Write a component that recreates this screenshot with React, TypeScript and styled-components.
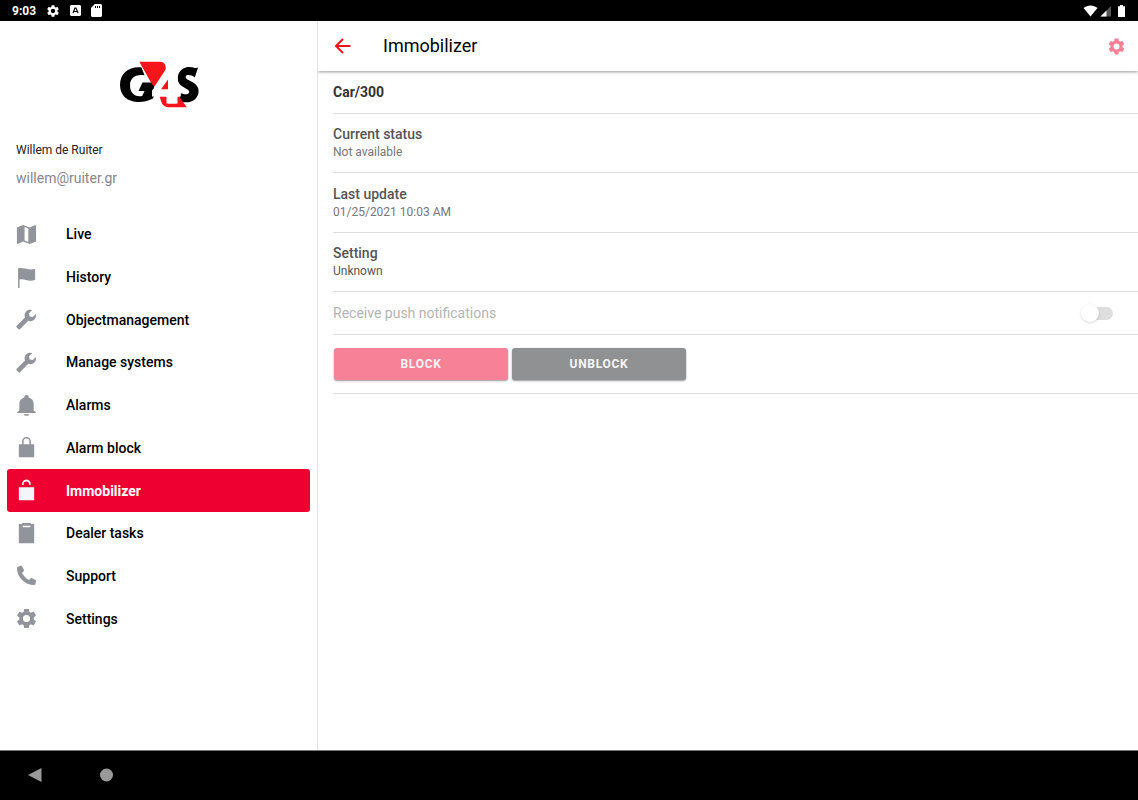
import React from "react";
import styled, { createGlobalStyle } from "styled-components";

const GlobalStyle = createGlobalStyle`
  *, *::before, *::after { box-sizing: border-box; }
  html, body { margin: 0; background: #fff; }
  body { font-family: Roboto, sans-serif; color: #000; }
`;

const Screen = styled.div`
  display: flex;
  flex-direction: column;
  min-height: 100vh;
`;

const StatusBar = styled.div`
  display: flex;
  align-items: center;
  justify-content: space-between;
  height: 21px;
  padding: 0 12px;
  background: #000;
  color: #fff;
`;

const StatusGroup = styled.div<{ $gap: number }>`
  display: flex;
  align-items: center;
  gap: ${(p) => p.$gap}px;
`;

const Clock = styled.span`
  font-size: 12px;
  line-height: 20px;
  font-weight: 700;
`;

const Body = styled.div`
  display: flex;
  flex: 1;
`;

const Sidebar = styled.aside`
  flex: 0 0 318px;
  border-right: 1px solid #e4e4e4;
`;

const LogoWrap = styled.div`
  display: flex;
  justify-content: center;
  padding: 39px 0 28px;

  svg { display: block; }
`;

const Profile = styled.div`
  padding: 0 16px;
`;

const UserName = styled.div`
  font-size: 12px;
  line-height: 24px;
  padding-top: 1px;
  color: #222;
`;

const UserMail = styled.div`
  padding-top: 4px;
  font-size: 14px;
  line-height: 24px;
  color: #85868f;
`;

const Menu = styled.nav`
  display: grid;
  grid-auto-rows: 1fr;
  height: 427px;
  margin-top: 23px;
  padding: 0 7px;
`;

const MenuItem = styled.a<{ $active?: boolean }>`
  display: flex;
  align-items: center;
  gap: 28px;
  padding: 0 8px;
  border-radius: 3px;
  font-size: 14px;
  line-height: 20px;
  font-weight: ${(p) => (p.$active ? 700 : 500)};
  text-decoration: none;
  color: ${(p) => (p.$active ? "#fff" : "#000")};
  background: ${(p) => (p.$active ? "#ee0030" : "transparent")};

  svg {
    width: 23px;
    height: 23px;
    color: ${(p) => (p.$active ? "#f4f5f8" : "#92949c")};
  }
`;

const Main = styled.main`
  flex: 1;
  min-width: 0;
`;

const Header = styled.header`
  display: flex;
  align-items: center;
  height: 50px;
  padding: 0 12px 0 15px;
  box-shadow: 0 1px 3px rgba(0, 0, 0, 0.4);
  clip-path: inset(0 0 -6px 0);
`;

const IconButton = styled.button<{ $color?: string }>`
  display: flex;
  padding: 0;
  border: 0;
  background: none;
  color: ${(p) => p.$color ?? "inherit"};
`;

const Title = styled.h1`
  flex: 1;
  margin: 0 0 0 30px;
  font-size: 18px;
  line-height: 24px;
  font-weight: 400;
  color: #000;
`;

const Rows = styled.div`
  padding-left: 15px;
`;

const Row = styled.section<{ $height: number }>`
  display: flex;
  flex-direction: column;
  justify-content: center;
  min-height: ${(p) => p.$height}px;
  border-bottom: 1px solid #dedede;
`;

const ObjectName = styled.h2`
  margin: 0;
  font-size: 14px;
  line-height: 18px;
  font-weight: 700;
  color: #333;
`;

const RowLabel = styled.div`
  font-size: 14px;
  line-height: 18px;
  font-weight: 500;
  color: #555;
`;

const RowValue = styled.div<{ $dark?: boolean }>`
  font-size: 12px;
  line-height: 18px;
  color: ${(p) => (p.$dark ? "#555" : "#777")};
`;

const ToggleLabel = styled.label`
  display: flex;
  align-items: center;
  justify-content: space-between;
  padding-right: 25px;
  font-size: 14px;
  line-height: 20px;
  color: #b4b4b4;
`;

const Toggle = styled.input`
  appearance: none;
  display: flex;
  align-items: center;
  width: 28px;
  height: 13px;
  margin: 0;
  border-radius: 7px;
  background: #dedede;

  &::before {
    content: "";
    flex: none;
    width: 18px;
    height: 18px;
    margin-left: -4px;
    border-radius: 50%;
    background: #fff;
    box-shadow: 0 1px 3px rgba(0, 0, 0, 0.16);
  }
`;

const Actions = styled.div`
  display: flex;
  gap: 4px;
  padding-left: 1px;
`;

const ActionButton = styled.button<{ $color: string }>`
  width: 174px;
  height: 32px;
  padding: 0;
  border: 0;
  border-radius: 3px;
  background: ${(p) => p.$color};
  color: #f6f6f6;
  font-family: inherit;
  font-size: 12px;
  line-height: 16px;
  font-weight: 700;
  letter-spacing: 0.06em;
  text-transform: uppercase;
  box-shadow: 0 1px 2px rgba(0, 0, 0, 0.4);
`;

const NavBar = styled.footer`
  display: flex;
  align-items: center;
  gap: 58px;
  height: 50px;
  padding: 0 28px 2px;
  border-top: 1px solid #777;
  background: #000;
`;

const icons = {
  map: "M2 4.700 8.400 2v17.200L2.500 22 2 21.500zM8.400 2l6.900 2.700V22L8.400 19.200zM10 4.200v14l3.900 1.600V5.700zM15.300 4.700 21.500 2l.5.500v16.800L15.300 22z",
  flag: "M3.200 2.500C5 1.700 7.500 1.900 10.200 2.700c2.900.8 5.800 1.300 10.800.4v11.600c-3.500.9-6.400.8-9.600-.1-2.400-.7-4.700-1-6.600-.6V23H3.200z",
  wrench:
    "M21.6 6.3l-3.1 3.1-3.200-.6-.7-3.300 3.200-3.100c-2.200-.9-4.600-.4-6.200 1.200-1.700 1.700-2 4-1.200 6.300L1.600 18.700c-.4.400-.4.900 0 1.300l2.200 2.200c.4.400.9.400 1.300 0l8.800-8.900c2.100.9 4.500.4 6.300-1.300 1.600-1.600 2.100-3.600 1.400-5.700z",
  bell: "M12 22.800c1.700 0 2.900-.8 3-1.700H9c.1.900 1.300 1.700 3 1.700zm7.500-5.500V10.500c0-3.500-2-6-5.100-6.900v-.5A2.300 2.300 0 0 0 12 1a2.300 2.300 0 0 0-2.400 2.100v.5c-3.100.9-5.100 3.400-5.100 6.900v6.800l-2.300 1.800v.7h19.600v-.7l-2.300-1.800z",
  lock: "M4 8.500h3.400V5.600a4.600 4.600 0 0 1 9.200 0v2.900H20v13.700H4zM9 8.500h6V5.600a3 3 0 0 0-6 0z",
  unlock:
    "M4 8.500h5V6.300H7.300V5.500a4.600 4.600 0 0 1 9.200-.5v1h-1.900v-.6a2.800 2.800 0 0 0-5.600.1v3H20v13.700H4z",
  clipboard: "M4 2h3.500V1h9v1H20v20.300H4zM8 4v1.500h8V4z",
  phone:
    "M21.4 16.700l-3.600-1.800c-.5-.3-1.100-.2-1.500.2l-1.800 1.700C11.700 15.200 8.800 12.300 7.300 9.400L9 7.600c.4-.4.5-1 .3-1.500L7.500 2.500c-.3-.6-.9-.8-1.500-.6L3 2.800c-.6.2-1 .7-1 1.300C2.100 13.600 10.400 21.800 19.900 22c.6 0 1.100-.4 1.300-.9l.8-2.900c.2-.6 0-1.200-.6-1.500z",
  gear: "M19.43 12.98c.04-.32.07-.64.07-.98s-.03-.66-.07-.98l2.11-1.65c.19-.15.24-.42.12-.64l-2-3.46c-.12-.22-.39-.3-.61-.22l-2.49 1c-.52-.4-1.08-.73-1.69-.98l-.38-2.65C14.46 2.18 14.25 2 14 2h-4c-.25 0-.46.18-.49.42l-.38 2.65c-.61.25-1.17.59-1.69.98l-2.49-1c-.23-.09-.49 0-.61.22l-2 3.46c-.13.22-.07.49.12.64l2.11 1.65c-.04.32-.07.65-.07.98s.03.66.07.98l-2.11 1.65c-.19.15-.24.42-.12.64l2 3.46c.12.22.39.3.61.22l2.49-1c.52.4 1.08.73 1.69.98l.38 2.65c.03.24.24.42.49.42h4c.25 0 .46-.18.49-.42l.38-2.65c.61-.25 1.17-.59 1.69-.98l2.49 1c.23.09.49 0 .61-.22l2-3.46c.12-.22.07-.49-.12-.64l-2.11-1.65zM12 15.700a3.700 3.700 0 1 1 0-7.400 3.700 3.700 0 0 1 0 7.400z",
};

type IconName = keyof typeof icons;

const Icon = ({ name, size = 23 }: { name: IconName; size?: number }) => (
  <svg width={size} height={size} viewBox="0 0 24 24" fill="currentColor" fillRule="evenodd" aria-hidden="true">
    <path d={icons[name]} />
  </svg>
);

const Logo = () => (
  <svg width="82" height="49" viewBox="0 0 82 49" role="img" aria-label="G4S">
    <path
      d="M23.500 7.400C11 6.200 2 13.200 2 25c0 10.500 7.500 17 18.500 17 5.500 0 9.500-1 14.500-3.500l1-2.500V24.500L34 22.500H24.500L20.500 31h6l-2.300 5C17 37.500 12 33 12 25.500c0-7 4.500-11.500 14.500-10.200z"
      fill="#000"
    />
    <path
      d="M68.500 7.300c2.800-.6 5.500-.2 8.500.6l3-.2-3.200 9.700c-2.500-1.900-5.500-2.700-7.300-2.300-2.300.5-2.400 2.900 0 4.300l6.500 3.700c7.500 4.600 5.500 16-3.500 18.700-4 1-8.500.6-12-.6L62.500 33c3.200 1.400 5.900 1.600 7.500.7 1.900-1.100 1.500-3-.5-4.200L64.500 26.500C56.500 22 59 9.500 68.500 7.300z"
      fill="#000"
    />
    <path
      d="M21.300 1.700H42c3 0 5 1.600 5.600 4.500.2 1.300.3 2.200-.1 3.500L36.500 26.500c-1.500-1-2.500-2.500-3.500-4zM41.500 36.500h7v7H58V36.500h3l7.800 10.800H52c-5 0-7-1.500-8.500-5z"
      fill="#fa141c"
    />
    <path d="M49 11.500h10.500v17.800h3.300v7.200h-3.300v7h-9.500v-7H34v-6z" fill="#fff" />
    <path d="M50 19.500v9.800h-7z" fill="#fa141c" />
  </svg>
);

const menu: { icon: IconName; label: string; active?: boolean }[] = [
  { icon: "map", label: "Live" },
  { icon: "flag", label: "History" },
  { icon: "wrench", label: "Objectmanagement" },
  { icon: "wrench", label: "Manage systems" },
  { icon: "bell", label: "Alarms" },
  { icon: "lock", label: "Alarm block" },
  { icon: "unlock", label: "Immobilizer", active: true },
  { icon: "clipboard", label: "Dealer tasks" },
  { icon: "phone", label: "Support" },
  { icon: "gear", label: "Settings" },
];

export default function App() {
  return (
    <Screen>
      <GlobalStyle />
      <StatusBar>
        <StatusGroup $gap={10}>
          <Clock>9:03</Clock>
          <Icon name="gear" size={14} />
          <svg width="11" height="11" viewBox="0 0 11 11" aria-hidden="true">
            <path d="M1 0h9l1 1v9l-1 1H1l-1-1V1z" fill="#fff" />
            <path d="M3 8 5 3h1l2 5M4 6.500h3" fill="none" stroke="#000" strokeWidth="1.200" />
          </svg>
          <svg width="11" height="13" viewBox="0 0 11 13" aria-hidden="true">
            <path d="M3.800 0H10l1 1v11l-1 1H1l-1-1V4z" fill="#fff" />
            <path d="M4.500 2v2M6.500 2v2M8.500 2v2" stroke="#000" strokeWidth="1" />
          </svg>
        </StatusGroup>
        <StatusGroup $gap={2}>
          <svg width="15" height="12" viewBox="0 0 15 12" aria-hidden="true">
            <path d="M.5 3C4.500-.5 10.500-.5 14.500 3l-7 8.500z" fill="#fff" />
          </svg>
          <svg width="12" height="12" viewBox="0 0 12 12" aria-hidden="true">
            <path d="M11 1v10.500H.5z" fill="#555" />
            <path d="M6.500 5.500v6h-6z" fill="#fff" />
          </svg>
          <svg width="12" height="12" viewBox="0 0 12 12" aria-hidden="true">
            <path d="M6 0h3v1.300h2V12H4V1.300h2z" fill="#fff" />
          </svg>
        </StatusGroup>
      </StatusBar>

      <Body>
        <Sidebar>
          <LogoWrap>
            <Logo />
          </LogoWrap>
          <Profile>
            <UserName>Willem de Ruiter</UserName>
            <UserMail>willem@ruiter.gr</UserMail>
          </Profile>
          <Menu>
            {menu.map((item) => (
              <MenuItem key={item.label} href="#" $active={item.active}>
                <Icon name={item.icon} />
                {item.label}
              </MenuItem>
            ))}
          </Menu>
        </Sidebar>

        <Main>
          <Header>
            <IconButton aria-label="Back">
              <svg width="20" height="20" viewBox="0 0 20 20" fill="none" stroke="#f0121c" strokeWidth="2">
                <path d="M17.500 10H4M10 3l-7 7 7 7" />
              </svg>
            </IconButton>
            <Title>Immobilizer</Title>
            <IconButton aria-label="Settings" $color="#f77f96">
              <Icon name="gear" size={19} />
            </IconButton>
          </Header>
          <Rows>
            <Row $height={43}>
              <ObjectName>Car/300</ObjectName>
            </Row>
            <Row $height={59}>
              <RowLabel>Current status</RowLabel>
              <RowValue>Not available</RowValue>
            </Row>
            <Row $height={60}>
              <RowLabel>Last update</RowLabel>
              <RowValue>01/25/2021 10:03 AM</RowValue>
            </Row>
            <Row $height={59}>
              <RowLabel>Setting</RowLabel>
              <RowValue $dark>Unknown</RowValue>
            </Row>
            <Row $height={43}>
              <ToggleLabel>
                Receive push notifications
                <Toggle type="checkbox" role="switch" disabled />
              </ToggleLabel>
            </Row>
            <Row $height={59}>
              <Actions>
                <ActionButton $color="#f78297">Block</ActionButton>
                <ActionButton $color="#909193">Unblock</ActionButton>
              </Actions>
            </Row>
          </Rows>
        </Main>
      </Body>

      <NavBar>
        <IconButton aria-label="Back">
          <svg width="14" height="16" viewBox="0 0 14 16">
            <path d="M13.500 1v14L0 8z" fill="#999" />
          </svg>
        </IconButton>
        <IconButton aria-label="Home">
          <svg width="13" height="14" viewBox="0 0 13 14">
            <circle cx="6.500" cy="7" r="6.500" fill="#999" />
          </svg>
        </IconButton>
      </NavBar>
    </Screen>
  );
}
